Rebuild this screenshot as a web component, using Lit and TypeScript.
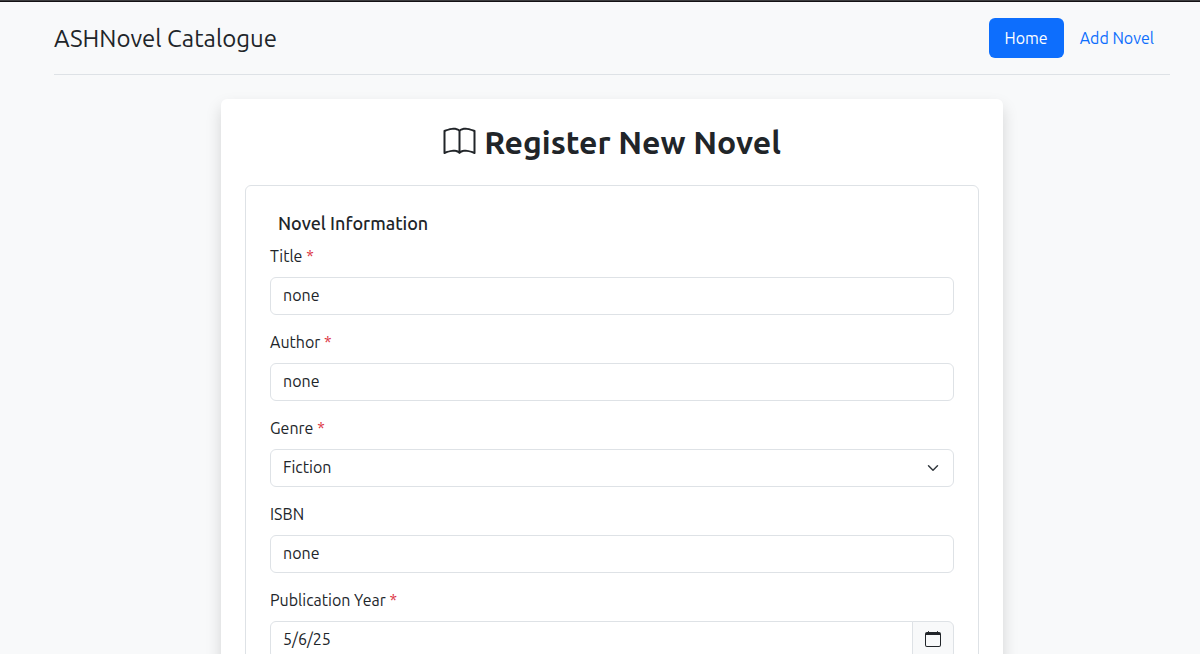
import { LitElement, html, css, svg } from "lit";
import { customElement } from "lit/decorators.js";

const bookIcon = html`<svg class="book" viewBox="0 0 16 16" fill="currentColor" aria-hidden="true">
  ${svg`<path d="M1 2.828c.885-.37 2.154-.769 3.388-.893 1.33-.134 2.458.063 3.112.752v9.746c-.935-.53-2.12-.603-3.213-.493-1.18.12-2.37.461-3.287.811zm7.5-.141c.654-.689 1.782-.886 3.112-.752 1.234.124 2.503.523 3.388.893v9.923c-.918-.35-2.107-.692-3.287-.81-1.094-.111-2.278-.039-3.213.492zM8 1.783C7.015.936 5.587.81 4.287.94c-1.514.153-3.042.672-3.994 1.105A.5.5 0 0 0 0 2.5v11a.5.5 0 0 0 .707.455c.882-.4 2.303-.881 3.68-1.02 1.409-.142 2.59.087 3.223.877a.5.5 0 0 0 .78 0c.633-.79 1.814-1.019 3.222-.877 1.378.139 2.8.62 3.681 1.02A.5.5 0 0 0 16 13.5v-11a.5.5 0 0 0-.293-.455c-.952-.433-2.48-.952-3.994-1.105C10.413.809 8.985.936 8 1.783"/>`}
</svg>`;

const calendarIcon = html`<svg class="calendar" viewBox="0 0 16 16" fill="currentColor" aria-hidden="true">
  ${svg`<path d="M3.5 0a.5.5 0 0 1 .5.5V1h8V.5a.5.5 0 0 1 1 0V1h1a2 2 0 0 1 2 2v11a2 2 0 0 1-2 2H2a2 2 0 0 1-2-2V3a2 2 0 0 1 2-2h1V.5a.5.5 0 0 1 .5-.5M1 4v10a1 1 0 0 0 1 1h12a1 1 0 0 0 1-1V4z"/>`}
</svg>`;

@customElement("app-root")
export class AppRoot extends LitElement {
  static styles = css`
    :host {
      display: block;
      box-sizing: border-box;
      height: 100vh;
      overflow: hidden;
      padding: 17px 30px 0 54px;
      border-top: 1px solid #3d3d3f;
      background: #f8f9fa;
      box-shadow: inset 0 1px 0 #131114;
      color: #212529;
      font: 400 16px/24px Ubuntu, system-ui, "Noto Sans", sans-serif;
    }
    * {
      box-sizing: border-box;
    }
    .header {
      display: flex;
      justify-content: space-between;
      align-items: center;
      padding-bottom: 16px;
      margin-bottom: 24px;
      border-bottom: 1px solid #dee2e6;
    }
    .brand {
      padding-top: 2px;
      font-size: 24px;
      line-height: 36px;
      color: inherit;
      text-decoration: none;
    }
    .nav {
      display: flex;
    }
    .nav-link {
      padding: 8px 16px;
      border-radius: 6px;
      color: #0d6efd;
      text-decoration: none;
    }
    .nav-link.active {
      background: #0d6efd;
      color: #fff;
    }
    .card {
      max-width: 782px;
      margin: 0 auto 24px;
      padding: 24px;
      border-radius: 6px;
      background: #fff;
      box-shadow: 0 8px 16px rgba(0, 0, 0, 0.15);
    }
    .heading {
      display: flex;
      justify-content: center;
      align-items: center;
      gap: 8px;
      margin: 0 0 24px;
      font-size: 32px;
      line-height: 38px;
      font-weight: 600;
    }
    .book {
      width: 33px;
      height: 32px;
    }
    .group {
      min-width: 0;
      margin: 0;
      padding: 24px 24px 8px;
      border: 1px solid #dee2e6;
      border-radius: 6px;
    }
    .legend {
      float: left;
      width: 100%;
      padding: 0 8px;
      margin-bottom: 8px;
      font-size: 18px;
      line-height: 27px;
      font-weight: 500;
    }
    .field {
      clear: both;
      margin-bottom: 16px;
    }
    .label {
      display: block;
      margin-bottom: 10px;
      line-height: 22px;
    }
    .required {
      color: #dc3545;
    }
    .control {
      display: block;
      width: 100%;
      height: 38px;
      padding: 5px 12px 7px;
      border: 1px solid #dee2e6;
      border-radius: 6px;
      background: #fff;
      color: inherit;
      font: inherit;
      appearance: none;
    }
    .select {
      background: #fff
        url("data:image/svg+xml,%3csvg xmlns='http://www.w3.org/2000/svg' viewBox='0 0 16 16'%3e%3cpath fill='none' stroke='%23343a40' stroke-linecap='round' stroke-linejoin='round' stroke-width='2' d='m2 5 6 6 6-6'/%3e%3c/svg%3e")
        no-repeat right 14px center / 12px 12px;
    }
    .input-group {
      display: flex;
    }
    .input-group .control {
      flex: 1;
      min-width: 0;
      border-radius: 6px 0 0 6px;
    }
    .addon {
      display: flex;
      align-items: center;
      margin-left: -1px;
      padding: 5px 12px 7px;
      border: 1px solid #dee2e6;
      border-radius: 0 6px 6px 0;
      background: #f8f9fa;
      color: inherit;
    }
    .calendar {
      width: 16px;
      height: 16px;
    }
  `;

  private label(id: string, text: string, required = false) {
    return html`<label class="label" for=${id}
      >${text}${required ? html` <span class="required">*</span>` : ""}</label
    >`;
  }

  private textField(id: string, text: string, required = false) {
    return html`<div class="field">
      ${this.label(id, text, required)}
      <input class="control" id=${id} type="text" value="none" ?required=${required} />
    </div>`;
  }

  render() {
    return html`
      <header class="header">
        <a class="brand" href="#">ASHNovel Catalogue</a>
        <nav class="nav">
          <a class="nav-link active" href="#" aria-current="page">Home</a>
          <a class="nav-link" href="#add">Add Novel</a>
        </nav>
      </header>
      <main class="card">
        <h2 class="heading">${bookIcon}<span>Register New Novel</span></h2>
        <form>
          <fieldset class="group">
            <legend class="legend">Novel Information</legend>
            ${this.textField("title", "Title", true)}
            ${this.textField("author", "Author", true)}
            <div class="field">
              ${this.label("genre", "Genre", true)}
              <select class="control select" id="genre" required>
                <option>Fiction</option>
              </select>
            </div>
            ${this.textField("isbn", "ISBN")}
            <div class="field">
              ${this.label("year", "Publication Year", true)}
              <div class="input-group">
                <input class="control" id="year" type="text" value="5/6/25" required />
                <button class="addon" type="button" aria-label="Choose date">${calendarIcon}</button>
              </div>
            </div>
          </fieldset>
        </form>
      </main>
    `;
  }
}
